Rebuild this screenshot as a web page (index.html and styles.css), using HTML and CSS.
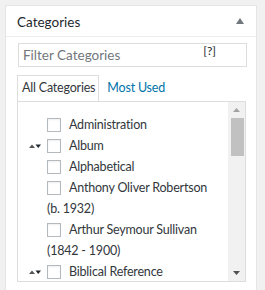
FILE: index.html
```html
<!DOCTYPE html>
<html lang="en">

<head>
    <meta charset="UTF-8">
    <meta name="viewport" content="width=device-width, initial-scale=1.0">
    <title>Categories</title>
    <link rel="stylesheet" href="styles.css">
</head>

<body>
    <div class="postbox">
        <div class="hndle">
            <h2 class="hndle_title">Categories</h2>
            <svg class="toggle_arrow" width="8" height="6" viewBox="0 0 8 6">
                <path d="M4 0 L8 6 L0 6 Z" fill="#72777c" />
            </svg>
        </div>

        <div class="inside">
            <!-- filter box with its help link sitting on top -->
            <div class="filter">
                <input type="text" class="filter_box" placeholder="Filter Categories">
                <a class="filter_help">[?]</a>
            </div>

            <ul class="category_tabs">
                <li class="tab active">All Categories</li>
                <li class="tab">Most Used</li>
            </ul>

            <div class="tabs_panel">
                <ul class="checklist">
                    <li><label><input type="checkbox">Administration</label></li>
                    <li><label><svg class="sort_handle" width="12" height="5" viewBox="0 0 12 5"><path d="M3 0.5 L6 4 L0 4 Z" fill="#555" /><path d="M6.5 0.5 L12 0.5 L9.25 4 Z" fill="#23282d" /></svg><input type="checkbox">Album</label></li>
                    <li><label><input type="checkbox">Alphabetical</label></li>
                    <li><label><input type="checkbox">Anthony Oliver Robertson (b. 1932)</label></li>
                    <li><label><input type="checkbox">Arthur Seymour Sullivan (1842 - 1900)</label></li>
                    <li><label><svg class="sort_handle" width="12" height="5" viewBox="0 0 12 5"><path d="M3 0.5 L6 4 L0 4 Z" fill="#555" /><path d="M6.5 0.5 L12 0.5 L9.25 4 Z" fill="#23282d" /></svg><input type="checkbox">Biblical Reference</label></li>
                </ul>

                <!-- drawn scrollbar so it looks the same everywhere -->
                <div class="scrollbar">
                    <div class="scroll_btn">
                        <svg width="7" height="4" viewBox="0 0 7 4"><path d="M3.5 0 L7 4 L0 4 Z" fill="#a3a3a3" /></svg>
                    </div>
                    <div class="scroll_track">
                        <div class="scroll_thumb"></div>
                    </div>
                    <div class="scroll_btn">
                        <svg width="7" height="4" viewBox="0 0 7 4"><path d="M0 0 L7 0 L3.5 4 Z" fill="#505050" /></svg>
                    </div>
                </div>
            </div>
        </div>
    </div>
</body>

</html>
```

FILE: styles.css
```css
body {
    margin: 0;
    padding: 5px 8px 0 5px;
    background: #f1f1f1;
    font-family: "Lato", "Liberation Sans", sans-serif;
    font-size: 12.5px;
    letter-spacing: -0.2px;
    color: #32373c;
    overflow: hidden;
}

.postbox {
    background: #fff;
    border: 1px solid #e5e5e5;
    padding-bottom: 12px;
}

.hndle {
    display: flex;
    align-items: center;
    justify-content: space-between;
    height: 31px;
    padding: 1px 12px 0 11px;
    box-sizing: border-box;
    border-bottom: 1px solid #eee;
}

.hndle_title {
    margin: 0;
    font-size: 13.5px;
    font-weight: normal;
    letter-spacing: 0;
    color: #23282d;
}

.toggle_arrow {
    display: block;
    margin-top: -2px;
}

.inside {
    padding: 6px 10px 0 11px;
}

.filter {
    position: relative;
}

.filter_box {
    display: block;
    box-sizing: border-box;
    width: 229px;
    height: 24px;
    margin: 0 0 0 1px;
    padding: 0 4px;
    border: 1px solid #ddd;
    font-family: inherit;
    font-size: 13.5px;
    color: #32373c;
    outline: none;
}

.filter_box::placeholder {
    color: #72777c;
}

.filter_help {
    position: absolute;
    top: 1px;
    right: 30px;
    font-size: 12px;
    line-height: 14px;
    letter-spacing: 0;
    color: #23282d;
}

.category_tabs {
    display: flex;
    margin: 8px 0 0 0;
    padding: 0;
    list-style: none;
    position: relative;
    z-index: 1;
}

.tab {
    height: 25px;
    line-height: 24px;
    padding: 0 8px 0 7px;
    border: 1px solid transparent;
    border-bottom: none;
    color: #0073aa;
}

.tab.active {
    background: #fff;
    border-color: #ddd;
    color: #32373c;
    padding: 0 3px 0 4px;
}

.tabs_panel {
    display: flex;
    height: 179px;
    border: 1px solid #ddd;
    overflow: hidden;
}

.checklist {
    flex: 1;
    margin: 0;
    padding: 12px 8px 0 29px;
    list-style: none;
    overflow: hidden;
}

.checklist li {
    line-height: 21px;
}

.checklist label {
    display: block;
}

.checklist input[type="checkbox"] {
    -webkit-appearance: none;
    appearance: none;
    width: 14px;
    height: 14px;
    margin: 0 8px 0 0;
    border: 1px solid #b4b9be;
    background: #fff;
    box-shadow: inset 0 1px 2px rgba(0, 0, 0, 0.07);
    vertical-align: -3px;
    box-sizing: border-box;
}

.sort_handle {
    margin-left: -18px;
    margin-right: 6px;
    vertical-align: 1px;
}

.scrollbar {
    display: flex;
    flex-direction: column;
    width: 17px;
    background: #f1f1f1;
}

.scroll_btn {
    display: flex;
    align-items: center;
    justify-content: center;
    height: 16px;
}

.scroll_track {
    flex: 1;
}

.scroll_thumb {
    height: 38px;
    margin: 0 1px 0 3px;
    background: #c1c1c1;
}
```
